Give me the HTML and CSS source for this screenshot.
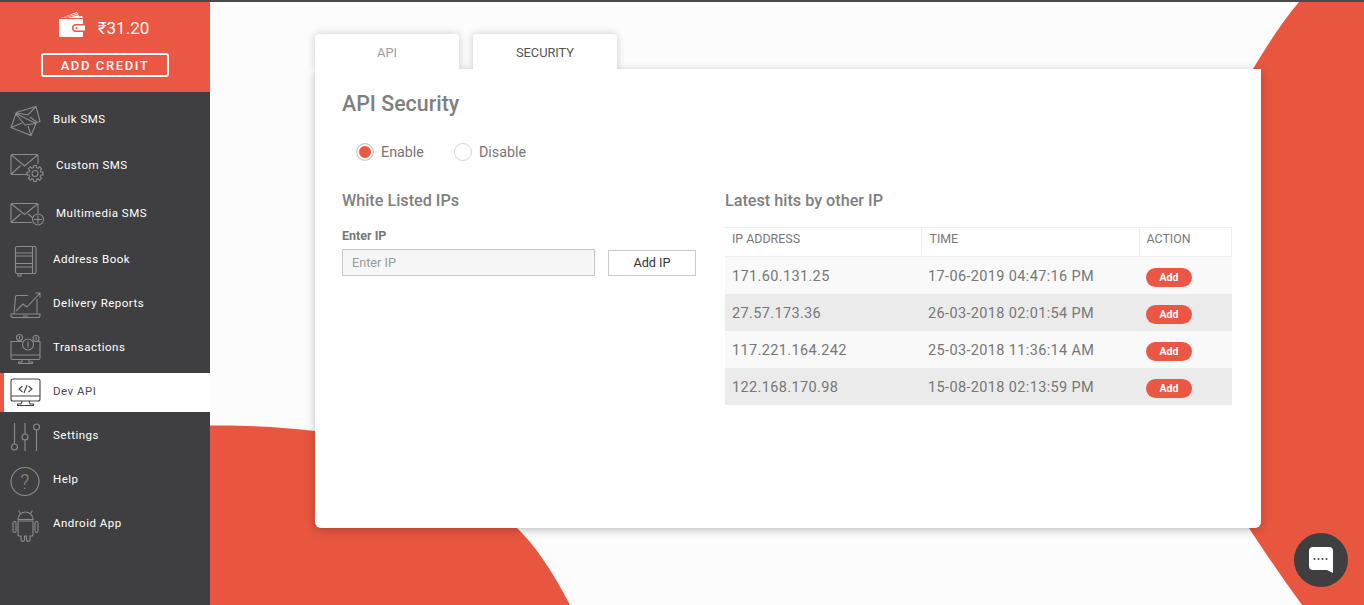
FILE: index.html
```html
<!DOCTYPE html>
<html lang="en">
<head>
<meta charset="utf-8">
<title>API Security</title>
<link rel="stylesheet" href="styles.css">
</head>
<body>
<div class="app">
  <svg class="blobs" width="1154" height="603" viewBox="210 2 1154 603" aria-hidden="true">
    <path class="blob" d="M210 605V425.500C250 425 285 427.500 315 431C395 442 465 480 517 528C537 547 556 578 570 605Z"/>
    <path class="blob" d="M1299 2C1282 22 1266 47 1253 69C1200 170 1180 420 1249 528C1258 542 1280 575 1302 605H1364V2Z"/>
  </svg>
  <aside class="sidebar">
    <div class="wallet">
      <div class="balance">
        <svg width="28" height="26" viewBox="0 0 28 26"><path class="w" d="M3 6 19 0l2 4.500 3-.6 1 2.100H3z"/><path class="w-line" d="M5 5.500 19 1.500M8 5.800 20 3"/><path class="w" d="M1 7h24v5h-7a4 4 0 0 0-4 4 4 4 0 0 0 4 4h7v4a1 1 0 0 1-1 1H2a1 1 0 0 1-1-1z"/><path class="w" d="M18 13.500h9v5h-9a2.500 2.500 0 0 1 0-5z"/><circle class="r" cx="18.500" cy="16" r="1"/></svg>
        <span class="amount">₹31.20</span>
      </div>
      <button class="credit">ADD CREDIT</button>
    </div>
    <nav class="nav">
      <a class="item bulk">
        <svg class="ic" viewBox="0 0 36 36"><path d="M8 10.500 28 4.500l4 15-5 1.500M8 10.500l1 3M8.500 11 20 13l8-8.500M22 15l6.500 5"/><path d="M8 11.500 28 21.500 23 33.500 3 25.500zM8 12l9 11 11-1.500M3 25.500 14 21M23 33.500l-3-9.500"/></svg>
        <span>Bulk SMS</span>
      </a>
      <a class="item custom wide">
        <svg class="ic" viewBox="0 0 36 36"><path d="M20 26.500H4a1 1 0 0 1-1-1v-18a1 1 0 0 1 1-1h25a1 1 0 0 1 1 1V16M3.500 7l13 11 13-11M3.500 26l9-8.500"/><g transform="translate(27 25.500)"><polygon points="5.900,-1.500 8,-1.400 8,1.400 5.900,1.500 5.230,3.110 6.650,4.670 4.670,6.650 3.110,5.230 1.500,5.900 1.400,8 -1.400,8 -1.500,5.900 -3.110,5.230 -4.670,6.650 -6.650,4.670 -5.230,3.110 -5.900,1.500 -8,1.400 -8,-1.400 -5.900,-1.500 -5.230,-3.110 -6.650,-4.670 -4.670,-6.650 -3.110,-5.230 -1.500,-5.900 -1.400,-8 1.400,-8 1.500,-5.900 3.110,-5.230 4.670,-6.650 6.650,-4.670 5.230,-3.110"/><circle r="3"/></g></svg>
        <span>Custom SMS</span>
      </a>
      <a class="item media wide">
        <svg class="ic" viewBox="0 0 36 36"><path d="M24 26.500H4a1 1 0 0 1-1-1v-17a1 1 0 0 1 1-1h25a1 1 0 0 1 1 1V18M3.500 8l13 10.500L29.500 8M3.500 26l9-8M20 18l5 4"/><circle cx="30" cy="23.500" r="5.500"/><path d="M30 19.500v8M26 23.500h8"/></svg>
        <span>Multimedia SMS</span>
      </a>
      <a class="item book">
        <svg class="ic" viewBox="0 0 36 36"><rect x="7.500" y="3.500" width="20.500" height="27" rx="1.500"/><path d="M24.500 3.500v27M7.500 10h17M7.500 13h17M7.500 20.500h17M7.500 24h17M10 30.500v2.500h3v-2.500"/></svg>
        <span>Address Book</span>
      </a>
      <a class="item">
        <svg class="ic" viewBox="0 0 36 36"><path d="M6 26.500 7.500 10a1.500 1.500 0 0 1 1.500-1.500H20M29 12v14.500M3 27h29v1.500a2 2 0 0 1-2 2H5a2 2 0 0 1-2-2zM15 29h5M8 24l7-7 4 3L32 6M27.500 6H32v4.500"/></svg>
        <span>Delivery Reports</span>
      </a>
      <a class="item">
        <svg class="ic" viewBox="0 0 36 36"><path d="M14.500 10.500H3V27a1.500 1.500 0 0 0 1.500 1.500h26A1.500 1.500 0 0 0 32 27V10.500h-6.500M3 24h29M14 28.500v2.500h-3.500v1.500h14V31H21v-2.500"/><circle cx="20" cy="13.500" r="5.500"/><circle cx="11.500" cy="6.500" r="3"/><circle cx="28" cy="7.500" r="3"/><path d="M20 10.500v6M11.500 5v3M28 6v3"/></svg>
        <span>Transactions</span>
      </a>
      <a class="item active">
        <svg class="ic" viewBox="0 0 36 36"><rect x="3" y="4" width="29" height="22" rx="2"/><path d="M3 21h29M14 26l-1 3h-3.500v1.500h16V29H22l-1-3M14.500 11 11 14l3.500 3M20.500 11l3.500 3-3.500 3M19 10l-3 8"/></svg>
        <span>Dev API</span>
      </a>
      <a class="item">
        <svg class="ic" viewBox="0 0 36 36"><path d="M6.500 4v21M17 4v11M17 21v11M28.500 11v21"/><circle cx="6.500" cy="28" r="3"/><circle cx="17" cy="18" r="3"/><circle cx="28.500" cy="8" r="3"/></svg>
        <span>Settings</span>
      </a>
      <a class="item">
        <svg class="ic" viewBox="0 0 36 36"><circle cx="17" cy="18.500" r="14"/><text class="q" x="17" y="25.500" text-anchor="middle">?</text></svg>
        <span>Help</span>
      </a>
      <a class="item">
        <svg class="ic" viewBox="0 0 36 36"><path d="M10 12.500a7.500 7.500 0 0 1 15 0zM12.500 6.500 10.500 3.500M22.500 6.500l2-3M10 14h15v14a1 1 0 0 1-1 1h-2v4a1.800 1.800 0 0 1-3.500 0v-4h-2v4a1.800 1.800 0 0 1-3.500 0v-4h-2a1 1 0 0 1-1-1z"/><rect x="5" y="14.500" width="3" height="11" rx="1.500"/><rect x="27" y="14.500" width="3" height="11" rx="1.500"/></svg>
        <span>Android App</span>
      </a>
    </nav>
  </aside>
  <main class="main">
    <div class="tabs">
      <div class="tab">API</div>
      <div class="tab on">SECURITY</div>
    </div>
    <section class="card">
      <h1 class="title">API Security</h1>
      <div class="radios">
        <label class="radio"><i class="dot sel"></i>Enable</label>
        <label class="radio"><i class="dot"></i>Disable</label>
      </div>
      <div class="cols">
        <div class="left">
          <h2 class="sub">White Listed IPs</h2>
          <div class="lab">Enter IP</div>
          <div class="form">
            <input class="ip" placeholder="Enter IP">
            <button class="addip">Add IP</button>
          </div>
        </div>
        <div class="right">
          <h2 class="sub">Latest hits by other IP</h2>
          <table class="hits">
            <thead><tr><th>IP ADDRESS</th><th>TIME</th><th>ACTION</th></tr></thead>
            <tbody>
              <tr><td>171.60.131.25</td><td>17-06-2019 04:47:16 PM</td><td><b class="pill">Add</b></td></tr>
              <tr><td>27.57.173.36</td><td>26-03-2018 02:01:54 PM</td><td><b class="pill">Add</b></td></tr>
              <tr><td>117.221.164.242</td><td>25-03-2018 11:36:14 AM</td><td><b class="pill">Add</b></td></tr>
              <tr><td>122.168.170.98</td><td>15-08-2018 02:13:59 PM</td><td><b class="pill">Add</b></td></tr>
            </tbody>
          </table>
        </div>
      </div>
    </section>
  </main>
  <div class="chat">
    <svg width="26" height="28" viewBox="0 0 26 28"><path class="w" d="M5 1h16a4 4 0 0 1 4 4v22l-6-3H5a4 4 0 0 1-4-4V5a4 4 0 0 1 4-4z"/><g class="d"><circle cx="6.500" cy="13" r="1"/><circle cx="10.500" cy="13" r="1"/><circle cx="14.500" cy="13" r="1"/><circle cx="18.500" cy="13" r="1"/></g></svg>
  </div>
</div>
</body>
</html>
```
FILE: styles.css
```css
* { box-sizing: border-box; }
html, body { margin: 0; height: 100%; overflow: hidden; }
body { font-family: Roboto, "Liberation Sans", sans-serif; background: #fcfcfc; }
.app { position: relative; display: flex; height: 605px; border-top: 2px solid #4a4a4a; overflow: hidden; }
.blobs { position: absolute; left: 210px; top: 0; }
.blob { fill: #e95640; }
.sidebar { position: relative; width: 210px; flex: none; background: #3f3f41; display: flex; flex-direction: column; }
.wallet { height: 90px; background: #ea5743; display: flex; flex-direction: column; align-items: center; padding-top: 10px; }
.balance { display: flex; align-items: center; gap: 12px; height: 26px; margin-left: -3px; }
.w { fill: #fff; }
.w-line { fill: none; stroke: #ea5743; stroke-width: .8; }
.r { fill: #ea5743; }
.amount { color: #fff; font-size: 17px; line-height: 26px; padding-top: 5px; }
.credit { margin-top: 15px; width: 128px; height: 24px; background: none; border: 2px solid #fff; border-radius: 3px; color: #fff; font: 500 13px Roboto, sans-serif; letter-spacing: 1.600px; padding: 0; }
.nav { display: flex; flex-direction: column; padding-top: 8px; }
.item { display: flex; align-items: center; height: 39px; margin-bottom: 5px; padding-left: 8px; color: #fff; font-size: 11.500px; letter-spacing: .5px; }
.item span { margin: 0 0 4px 9px; }
.item.bulk span { margin-bottom: 2px; }
.item.wide span { margin: 0 0 2px 12px; }
.bulk { margin-bottom: 7px; }
.custom { margin-bottom: 9px; }
.media { margin-bottom: 8px; }
.active { background: #fff; color: #4a4a55; border-left: 4px solid #ea5743; padding-left: 4px; }
.ic { width: 36px; height: 36px; flex: none; fill: none; stroke: #8c8c8c; stroke-width: 1.100; overflow: visible; }
.active .ic { stroke: #444; }
.q { font: 300 20px Roboto, sans-serif; fill: #8c8c8c; stroke: none; }
.main { position: relative; flex: 1; padding: 32px 103px 0 105px; }
.tabs { position: relative; z-index: 1; display: flex; gap: 14px; height: 35px; }
.tab { width: 144px; background: #fff; border-radius: 4px 4px 0 0; box-shadow: 0 0 8px rgba(0,0,0,.2); clip-path: inset(-12px -12px 0 -12px); text-align: center; font-size: 12.800px; line-height: 38px; color: #a0a0a0; }
.tab.on { color: #555; }
.card { position: relative; height: 459px; background: #fff; border-radius: 0 0 6px 6px; box-shadow: 0 2px 10px rgba(0,0,0,.25); padding: 0 28px 0 27px; }
.title { margin: 0; padding-top: 23px; font-size: 21.400px; line-height: 24px; font-weight: 500; color: #7f7f7f; }
.radios { display: flex; gap: 30px; margin: 24px 0 0 14px; height: 24px; align-items: center; }
.radio { display: flex; align-items: center; gap: 7px; font-size: 14.300px; color: #777; }
.dot { width: 18px; height: 18px; border-radius: 50%; border: 1px solid #d4d4d4; background: #fff; }
.dot.sel { background: #eb5744; box-shadow: inset 0 0 0 2px #fff; }
.cols { display: flex; gap: 29px; margin-top: 27px; }
.left { width: 354px; flex: none; }
.right { width: 507px; flex: none; }
.sub { margin: 0; font-size: 16.200px; line-height: 20px; font-weight: 500; color: #808080; }
.lab { margin-top: 17px; font-size: 12.500px; line-height: 16px; font-weight: 700; color: #777; }
.form { display: flex; align-items: flex-end; gap: 13px; margin-top: 5px; }
.ip { width: 253px; height: 27px; border: 1px solid #c8c8c8; background: #f6f6f6; padding: 0 9px; font: 12.700px Roboto, sans-serif; outline: 0; }
.ip::placeholder { color: #999; opacity: 1; }
.addip { width: 88px; height: 26px; background: #fff; border: 1px solid #ccc; font: 12.700px Roboto, sans-serif; color: #333; padding: 0 0 2px; }
.hits { width: 507px; margin-top: 16px; border-collapse: collapse; table-layout: fixed; }
.hits th { height: 29px; padding: 0 7px 8px; border: 1px solid #eee; border-left: 0; text-align: left; font-size: 12.400px; font-weight: 400; color: #777; }
.hits th:first-child { width: 196px; }
.hits th:nth-child(2) { width: 218px; padding-left: 8px; }
.hits th:nth-child(3) { padding-left: 7px; }
.hits td { height: 37px; padding: 2px 7px 0; font-size: 14.500px; letter-spacing: .36px; color: #777; background: #f9f9f9; }
.hits tr:nth-child(even) td { background: #ebebeb; }
.pill { display: block; width: 46px; height: 19px; margin-top: 2px; border-radius: 10px; background: #eb5744; color: #fff; font-size: 10.500px; letter-spacing: 0; line-height: 19px; text-align: center; }
.chat { position: absolute; left: 1294px; top: 531px; width: 54px; height: 54px; border-radius: 50%; background: #3f3f41; display: flex; align-items: center; justify-content: center; }
.d { fill: #444; }
```
